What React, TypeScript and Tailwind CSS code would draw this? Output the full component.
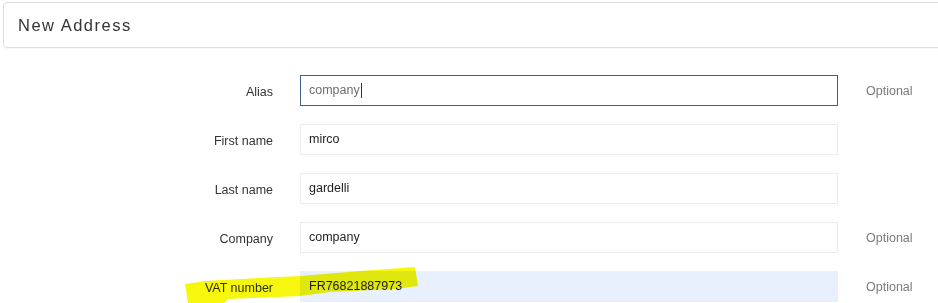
import React from "react";

type Row = {
  label: string;
  value: string;
  optional?: boolean;
  focused?: boolean;
  autofill?: boolean;
};

const rows: Row[] = [
  { label: "Alias", value: "company", optional: true, focused: true },
  { label: "First name", value: "mirco" },
  { label: "Last name", value: "gardelli" },
  { label: "Company", value: "company", optional: true },
  { label: "VAT number", value: "FR76821887973", optional: true, autofill: true },
];

function Field({ row }: { row: Row }) {
  return (
    <div className="flex h-[31px] items-center">
      <label className="w-[273px] shrink-0 pt-[4px] text-right text-[12.5px] text-[#333]">
        {row.label}
      </label>
      <div
        className={
          row.focused
            ? "ml-[27px] flex h-full w-[538px] shrink-0 items-center border border-[#3d6189] bg-white px-[8px]"
            : row.autofill
              ? "ml-[27px] flex h-full w-[538px] shrink-0 items-center border border-[#e8f0fe] bg-[#e8f0fe] px-[8px]"
              : "ml-[27px] flex h-full w-[538px] shrink-0 items-center border border-[#ececec] bg-white px-[8px]"
        }
      >
        <span
          className={
            row.focused
              ? "text-[12.5px] text-[#6f6f6f]"
              : "text-[12.5px] text-[#1f1f1f]"
          }
        >
          {row.value}
        </span>
        {row.focused && <span className="ml-px h-[15px] w-px bg-[#333]" />}
      </div>
      {row.optional && (
        <span className="ml-[28px] pt-[2px] text-[12.5px] text-[#7a7a7a]">Optional</span>
      )}
    </div>
  );
}

export default function App() {
  return (
    <div
      className="relative h-[303px] w-[938px] overflow-hidden bg-white"
      style={{ fontFamily: '"Liberation Sans", Arial, sans-serif' }}
    >
      <div className="ml-[3px] mt-[2px] flex h-[46px] w-[945px] items-center rounded-[4px] border border-[#dedede] pl-[14px] shadow-[0_1px_1px_rgba(0,0,0,0.03)]">
        <h1 className="text-[16.5px] font-normal tracking-[1.5px] text-[#333]">
          New Address
        </h1>
      </div>

      <div className="mt-[27px] flex flex-col gap-y-[18px]">
        {rows.map((row) => (
          <Field key={row.label} row={row} />
        ))}
      </div>

      {/* highlighter stroke over the VAT row */}
      <svg
        className="pointer-events-none absolute left-0 top-0 mix-blend-multiply"
        width="938"
        height="303"
        viewBox="0 0 938 303"
      >
        <path
          d="M185 284 L205 281 L222 280 L300 276 L360 271 L415 267 L418 286 L395 289 L330 292 L300 296 L228 299 L224 303 L188 303 Z"
          fill="#f6f60e"
          strokeLinejoin="round"
        />
      </svg>
    </div>
  );
}
